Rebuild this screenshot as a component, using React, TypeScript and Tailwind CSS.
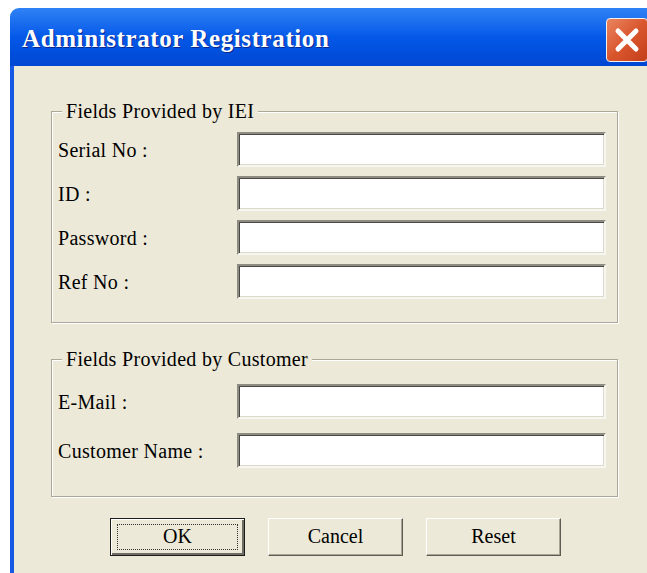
import React from 'react';

type Row = { label: string };

const iei: Row[] = [{ label: 'Serial No :' }, { label: 'ID :' }, { label: 'Password :' }, { label: 'Ref No :' }];
const customer: Row[] = [{ label: 'E-Mail :' }, { label: 'Customer Name :' }];

const serif = "font-['Liberation_Serif','Times_New_Roman',serif]";

const TextBox: React.FC = () => (
  <div className="w-[369px] h-[35px] bg-white border-2 border-t-[#8d8b82] border-l-[#8d8b82] border-b-[#f7f6f1] border-r-[#f7f6f1] shadow-[inset_1px_1px_0_#4a4943,inset_-1px_-1px_0_#dcd9cb]" />
);

const GroupBox: React.FC<{ title: string; rows: Row[]; height: string; padTop: string; gap: string }> = ({
  title,
  rows,
  height,
  padTop,
  gap,
}) => (
  <div
    className={`relative w-[567px] ${height} border border-[#aca899] shadow-[1px_1px_0_#ffffff,inset_1px_1px_0_#ffffff] ${padTop}`}
  >
    <span className="absolute left-[10px] top-[-12px] px-[4px] bg-[#ece9d8] text-[20px] leading-[22px] tracking-[0.3px] text-black">
      {title}
    </span>
    <div className={`flex flex-col ${gap} pl-[6px]`}>
      {rows.map((row) => (
        <div key={row.label} className="flex items-center">
          <span className="w-[179px] text-[20px] tracking-[0.3px] text-black">{row.label}</span>
          <TextBox />
        </div>
      ))}
    </div>
  </div>
);

const Button: React.FC<{ label: string; primary?: boolean }> = ({ label, primary }) => (
  <button
    className={`w-[135px] h-[38px] flex items-center justify-center bg-[#ece9d8] text-[20px] text-black ${
      primary
        ? 'border border-[#1c1c1a] shadow-[inset_1px_1px_0_#ffffff,inset_-2px_-2px_0_#6f6d63]'
        : 'border border-t-[#ffffff] border-l-[#ffffff] border-b-[#5e5c53] border-r-[#5e5c53] shadow-[inset_-1px_-1px_0_#a9a595]'
    }`}
  >
    {primary ? (
      <span className="w-[121px] h-[26px] flex items-center justify-center border border-dotted border-[#333] pb-[2px]">
        {label}
      </span>
    ) : (
      <span className="pb-[2px]">{label}</span>
    )}
  </button>
);

export default function App() {
  return (
    <div className={`w-[647px] h-[573px] overflow-hidden bg-white pt-[8px] pl-[10px] ${serif}`}>
      <div className="w-[650px] h-[600px] flex flex-col">
        {/* title bar */}
        <div className="h-[58px] shrink-0 rounded-t-[9px] bg-linear-to-b from-[#2f82f5] via-[#0458e8] to-[#0047d2] flex justify-between pl-[12px] pr-[12px]">
          <span className="mt-[18px] text-[25px] leading-[26px] font-bold tracking-[0.6px] text-white [text-shadow:1px_1px_0_#0b2a8f]">
            Administrator Registration
          </span>
          <div className="mt-[10px] w-[42px] h-[44px] rounded-[4px] border border-[#f3f1ee] bg-linear-to-br from-[#e98560] via-[#d9562d] to-[#c33f1b] flex items-center justify-center">
            <svg width="30" height="30" viewBox="0 0 30 30">
              <path d="M6 6 L24 24 M24 6 L6 24" stroke="#ffffff" strokeWidth="5" strokeLinecap="round" />
            </svg>
          </div>
        </div>

        {/* client area */}
        <div className="flex-1 bg-[#ece9d8] border-l-[4px] border-[#1458e4] pt-[45px] pl-[37px]">
          <GroupBox title="Fields Provided by IEI" rows={iei} height="h-[212px]" padTop="pt-[20px]" gap="gap-[9px]" />
          <div className="h-[36px]" />
          <GroupBox
            title="Fields Provided by Customer"
            rows={customer}
            height="h-[138px]"
            padTop="pt-[24px]"
            gap="gap-[14px]"
          />
          <div className="flex gap-[23px] mt-[21px] pl-[59px]">
            <Button label="OK" primary />
            <Button label="Cancel" />
            <Button label="Reset" />
          </div>
        </div>
      </div>
    </div>
  );
}
